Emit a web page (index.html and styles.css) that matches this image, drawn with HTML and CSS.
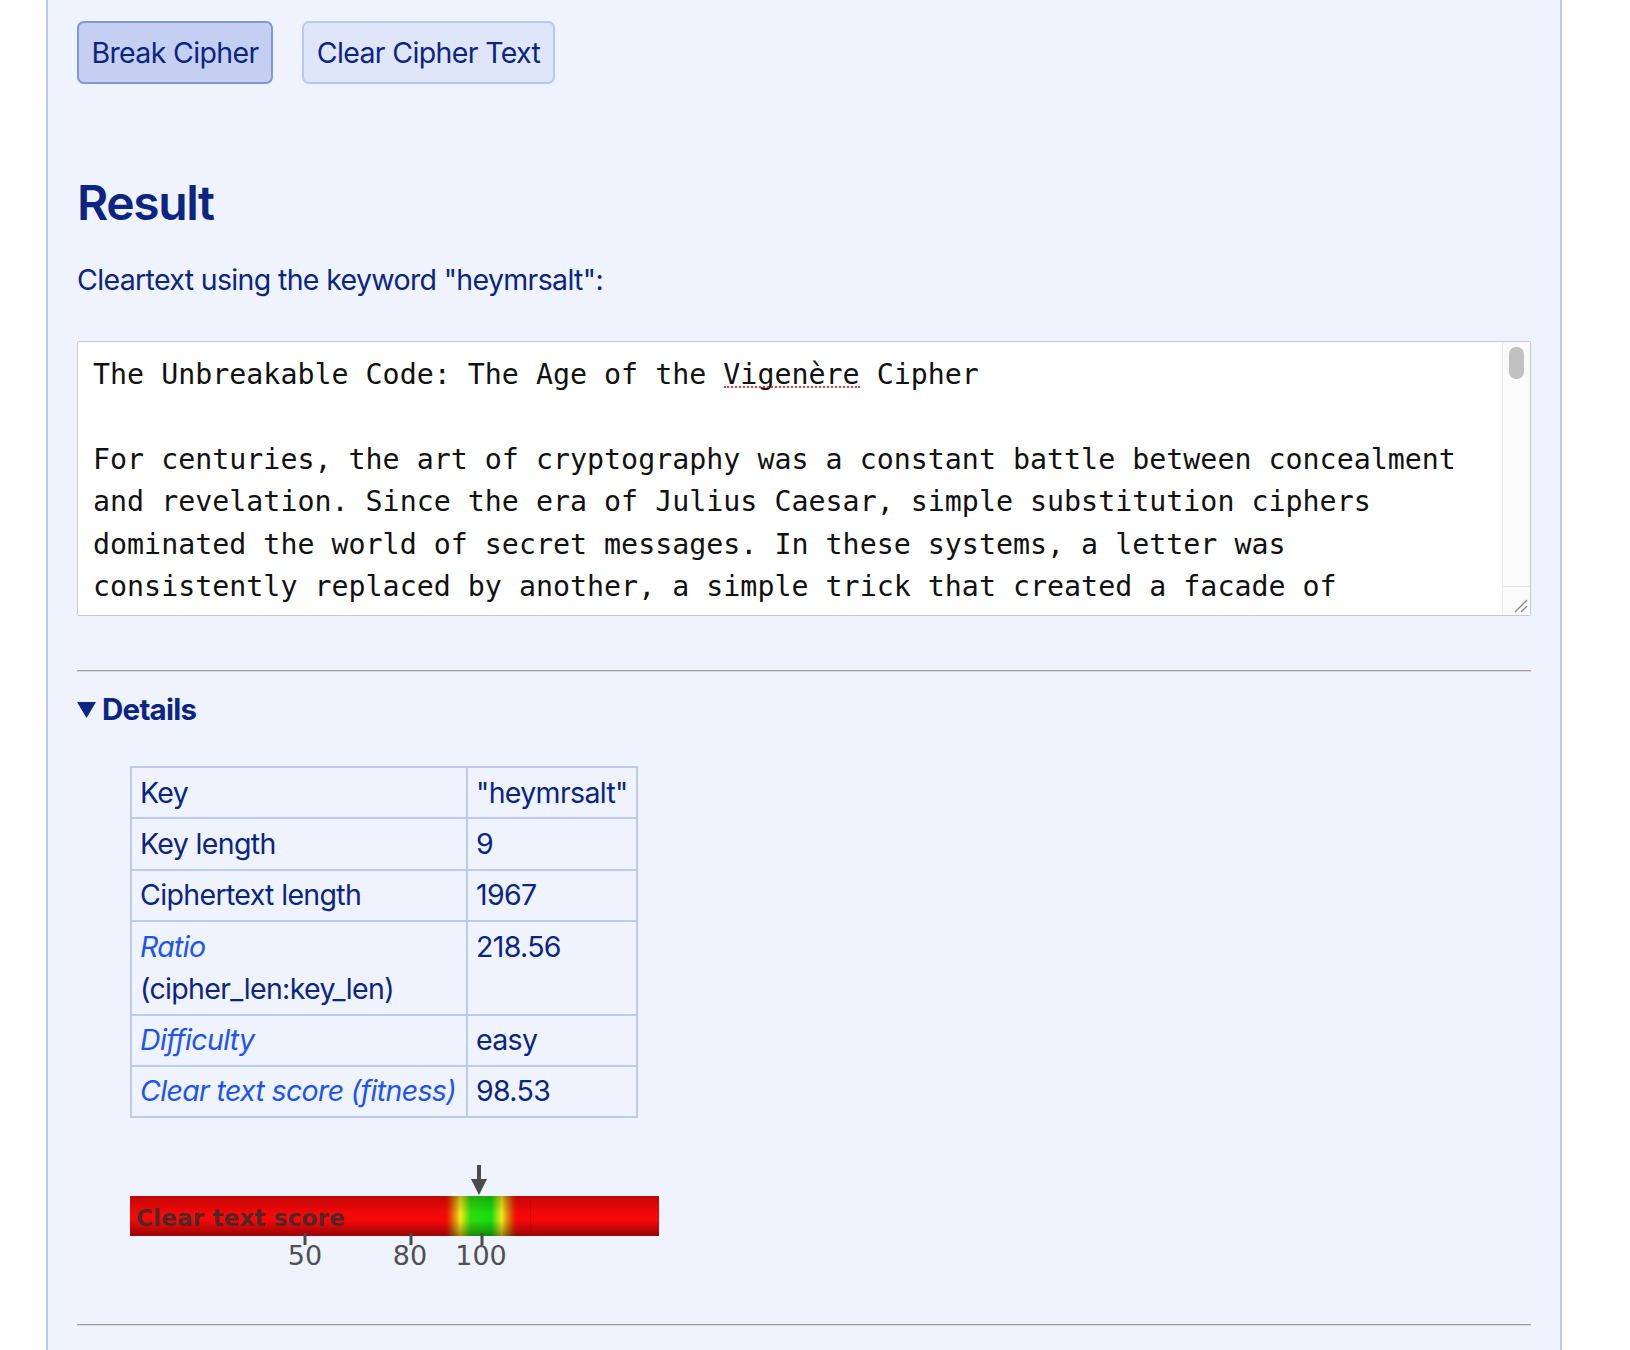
FILE: index.html
```html
<!DOCTYPE html>
<html lang="en">
<head>
<meta charset="utf-8">
<title>Vigenère Cipher Breaker</title>
<link rel="stylesheet" href="styles.css">
</head>
<body>
<main class="page">
  <div class="actions">
    <button class="btn btn-primary" type="button">Break Cipher</button>
    <button class="btn btn-secondary" type="button">Clear Cipher Text</button>
  </div>

  <h2 class="result-title">Result</h2>
  <p class="result-intro">Cleartext using the keyword "heymrsalt":</p>

  <div class="cleartext-box">
    <textarea class="cleartext" readonly spellcheck="false" aria-label="Cleartext">The Unbreakable Code: The Age of the Vigenère Cipher

For centuries, the art of cryptography was a constant battle between concealment and revelation. Since the era of Julius Caesar, simple substitution ciphers dominated the world of secret messages. In these systems, a letter was consistently replaced by another, a simple trick that created a facade of security. However, this security was an illusion. In the ninth century, the Arab polymath Al-Kindi described frequency analysis, a technique that exploited the fact that some letters appear more often than others.

The answer to this weakness arrived in the sixteenth century. Building on the work of Alberti and Trithemius, the French diplomat Blaise de Vigenère popularised a polyalphabetic cipher that used a keyword to shift each letter by a different amount. A single letter of plaintext could now become many different letters of ciphertext, and the tell-tale peaks of frequency analysis were flattened.

For almost three hundred years the method resisted every attack. It earned the name le chiffre indéchiffrable, the indecipherable cipher, and it was trusted by armies, diplomats and lovers alike. Its strength lay in the secret keyword: without it, the ciphertext looked like a random jumble of letters, and the careful counting that had toppled older systems led nowhere.

Yet no cipher is truly unbreakable. In the nineteenth century Charles Babbage and, independently, Friedrich Kasiski noticed that repeated fragments of plaintext sometimes produced repeated fragments of ciphertext. The distance between these repetitions betrayed the length of the keyword. Once the length was known, the message could be split into columns, each of which was nothing more than a simple Caesar shift, and the old weapon of frequency analysis worked once again.</textarea>
    <div class="scrollbar" aria-hidden="true">
      <div class="scroll-track"><div class="scroll-thumb"></div></div>
      <div class="resizer">
        <svg width="14" height="14" viewBox="0 0 14 14"><path d="M1 13 L13 1 M7 13 L13 7" stroke="#8a8a8a" stroke-width="1.3" fill="none"/></svg>
      </div>
    </div>
    <span class="spell-mark" aria-hidden="true"></span>
  </div>

  <hr class="rule">

  <details class="details" open>
    <summary class="details-summary"><svg class="marker" width="19" height="16" viewBox="0 0 19 16"><path d="M0 0 H19 L9.5 16 Z" fill="#0b2581"/></svg>Details</summary>
    <table class="stats">
      <tr><td class="label">Key</td><td class="value">"heymrsalt"</td></tr>
      <tr><td class="label">Key length</td><td class="value">9</td></tr>
      <tr><td class="label">Ciphertext length</td><td class="value">1967</td></tr>
      <tr><td class="label"><a class="term" href="#ratio">Ratio</a> (cipher_len:key_len)</td><td class="value">218.56</td></tr>
      <tr><td class="label"><a class="term" href="#difficulty">Difficulty</a></td><td class="value">easy</td></tr>
      <tr><td class="label"><a class="term" href="#fitness">Clear text score (fitness)</a></td><td class="value">98.53</td></tr>
    </table>

    <div class="score-meter">
      <svg width="530" height="106" viewBox="0 0 530 106">
        <defs>
          <linearGradient id="spot" x1="0" y1="0" x2="1" y2="0">
            <stop offset="0" stop-color="#ff0a0a" stop-opacity="0"/>
            <stop offset="0.1" stop-color="#d86a08" stop-opacity="0.85"/>
            <stop offset="0.22" stop-color="#f4e818"/>
            <stop offset="0.36" stop-color="#30dc10"/>
            <stop offset="0.64" stop-color="#18dc10"/>
            <stop offset="0.78" stop-color="#f4e818"/>
            <stop offset="0.9" stop-color="#d86a08" stop-opacity="0.85"/>
            <stop offset="1" stop-color="#ff0a0a" stop-opacity="0"/>
          </linearGradient>
          <linearGradient id="shade" x1="0" y1="0" x2="0" y2="1">
            <stop offset="0" stop-color="#000" stop-opacity="0.22"/>
            <stop offset="0.45" stop-color="#000" stop-opacity="0"/>
            <stop offset="0.6" stop-color="#000" stop-opacity="0"/>
            <stop offset="1" stop-color="#000" stop-opacity="0.38"/>
          </linearGradient>
        </defs>
        <rect x="0" y="32" width="529" height="40" fill="#f50808"/>
        <rect x="314" y="32" width="74" height="40" fill="url(#spot)"/>
        <rect x="0" y="32" width="529" height="40" fill="url(#shade)"/>
        <path d="M400.5 32 V72" stroke="#b00000" stroke-opacity="0.35" stroke-width="1"/>
        <text x="6" y="62" class="meter-caption">Clear text score</text>
        <path d="M175 69 V81 M281 69 V81 M352 69 V81" stroke="#4a4a4a" stroke-width="3"/>
        <text x="175" y="101" class="meter-label">50</text>
        <text x="280" y="101" class="meter-label">80</text>
        <text x="351" y="101" class="meter-label">100</text>
        <path d="M349 1 V18" stroke="#4a4a4a" stroke-width="4"/>
        <path d="M341 15 H357 L349 31 Z" fill="#4a4a4a"/>
      </svg>
    </div>
  </details>

  <hr class="rule rule-bottom">
</main>
</body>
</html>
```

FILE: styles.css
```css
html, body {
  margin: 0;
  padding: 0;
  background: #ffffff;
}

body {
  font-family: Inter, "Liberation Sans", sans-serif;
  color: #0b2581;
}

.page {
  box-sizing: border-box;
  margin-left: 46px;
  width: 1516px;
  min-height: 1350px;
  padding: 21px 29px 1px 29px;
  background: #eef3fe;
  border-left: 2px solid #b9c9f1;
  border-right: 2px solid #b9c9f1;
}

.actions {
  display: flex;
  gap: 29px;
}

.btn {
  height: 63px;
  padding: 0;
  border-radius: 7px;
  font-family: Inter, "Liberation Sans", sans-serif;
  font-size: 28.5px;
  letter-spacing: -0.65px;
  white-space: nowrap;
  color: #0b2581;
  cursor: pointer;
}

.btn-primary {
  width: 196px;
  background: #c4cff2;
  border: 2px solid #8196d4;
}

.btn-secondary {
  width: 253px;
  background: #dfe6f9;
  border: 2px solid #b8c8f1;
}

.result-title {
  margin: 90px 0 0;
  font-size: 48px;
  line-height: 57.6px;
  font-weight: 600;
  letter-spacing: -1.4px;
  color: #0b2581;
}

.result-intro {
  margin: 27px 0 0;
  font-size: 28.5px;
  line-height: 42.3px;
  letter-spacing: -0.65px;
}

.cleartext-box {
  position: relative;
  box-sizing: border-box;
  height: 275px;
  margin-top: 40px;
  display: flex;
  background: #ffffff;
  border: 1px solid #c6c9d1;
  border-radius: 2px;
}

.cleartext {
  flex: 1;
  display: block;
  box-sizing: border-box;
  height: 100%;
  margin: 0;
  padding: 12px 18px 0 15px;
  background: transparent;
  border: 0;
  outline: none;
  resize: none;
  overflow: hidden;
  white-space: pre-wrap;
  font-family: "DejaVu Sans Mono", "Liberation Mono", monospace;
  font-size: 28.3px;
  line-height: 42.4px;
  color: #111111;
}

.scrollbar {
  flex: none;
  width: 27px;
  display: flex;
  flex-direction: column;
  background: #fafafa;
  border-left: 1px solid #ececec;
}

.scroll-track {
  flex: 1;
  padding: 5px 6px 0 6px;
}

.scroll-thumb {
  height: 32px;
  border-radius: 7px;
  background: #c1c1c1;
}

.resizer {
  height: 26px;
  border-top: 1px solid #e6e6e6;
  display: flex;
  align-items: flex-end;
  justify-content: flex-end;
  padding: 0 2px 2px 0;
}

.spell-mark {
  position: absolute;
  left: 646px;
  top: 44px;
  width: 136px;
  height: 0;
  border-bottom: 2px dotted #e23b3b;
  pointer-events: none;
}

.rule {
  margin: 54px 0 0;
  height: 0;
  border: 0;
  border-top: 1px solid #9c9c9c;
  border-bottom: 1px solid #dcdcdc;
}

.rule-bottom {
  margin-top: 54px;
}

.details {
  margin: 0;
}

.details-summary {
  margin-top: 16px;
  list-style: none;
  display: flex;
  align-items: center;
  gap: 6px;
  font-size: 29.5px;
  line-height: 42.3px;
  font-weight: 700;
  letter-spacing: -0.75px;
  cursor: pointer;
}

.details-summary::-webkit-details-marker {
  display: none;
}

.marker {
  flex: none;
  margin-top: 2px;
}

.stats {
  margin: 36px 0 0 53px;
  border-collapse: collapse;
  font-size: 28.5px;
  line-height: 42.3px;
  letter-spacing: -0.65px;
}

.stats td {
  border: 2px solid #bccaf0;
  padding: 3.5px 8px;
  vertical-align: top;
}

.stats .label {
  width: 318px;
}

.stats .value {
  width: 152px;
  white-space: nowrap;
}

.term {
  color: #1f53ee;
  font-style: italic;
  text-decoration: none;
}

.score-meter {
  margin: 46px 0 0 53px;
  height: 106px;
}

.score-meter svg {
  display: block;
}

.meter-caption {
  font-family: "DejaVu Sans", Verdana, sans-serif;
  font-size: 23px;
  font-weight: 700;
  letter-spacing: 0.2px;
  fill: #3a2c2c;
  fill-opacity: 0.9;
}

.meter-label {
  font-family: "DejaVu Sans", Verdana, sans-serif;
  font-size: 27px;
  fill: #505050;
  text-anchor: middle;
}
```
